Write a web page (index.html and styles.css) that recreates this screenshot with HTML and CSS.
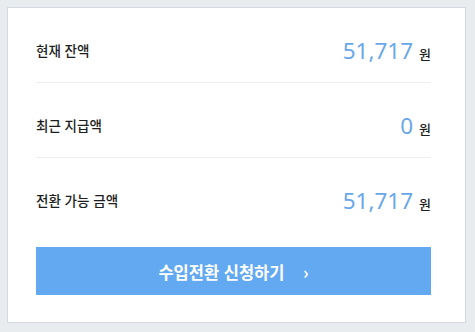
FILE: index.html
```html
<!DOCTYPE html>
<html lang="ko">
<head>
    <meta charset="UTF-8">
    <meta name="viewport" content="width=device-width, initial-scale=1.0">
    <title>수입전환</title>
    <link rel="stylesheet" href="styles.css">
</head>
<body>
    <div class="balance-card">
        <div class="row">
            <span class="label">현재 잔액</span>
            <span class="amount"><b>51,717</b><em>원</em></span>
        </div>
        <div class="row">
            <span class="label">최근 지급액</span>
            <span class="amount"><b>0</b><em>원</em></span>
        </div>
        <div class="row last">
            <span class="label">전환 가능 금액</span>
            <span class="amount"><b>51,717</b><em>원</em></span>
        </div>
        <button class="apply-btn">수입전환 신청하기 <span class="arrow">›</span></button>
    </div>
</body>
</html>
```

FILE: styles.css
```css
body {
    margin: 0;
    padding: 7px 9px 9px 7px;
    background: #e8ecef;
    font-family: "Noto Sans", "Noto Sans CJK KR", sans-serif;
    color: #1e1e1e;
}
.balance-card {
    background: #fff;
    border: 1px solid #d4dadf;
    padding: 0 34px 27px 28px;
}
.row {
    display: flex;
    justify-content: space-between;
    align-items: center;
    padding: 30px 0 20px;
    height: 24px;
    border-bottom: 1px solid #eceef0;
}
.row.last {
    border-bottom: none;
}
.label {
    font-family: "Noto Sans CJK KR", sans-serif;
    font-size: 13.5px;
    font-weight: 500;
}
.amount {
    display: flex;
    align-items: baseline;
}
.amount b {
    font-weight: normal;
    font-size: 22.5px;
    color: #6aa7ea;
}
.amount em {
    font-style: normal;
    font-family: "Noto Sans CJK KR", sans-serif;
    font-size: 13px;
    font-weight: 500;
    margin-left: 6px;
}
.apply-btn {
    display: block;
    width: 100%;
    height: 48px;
    margin-top: 15px;
    border: none;
    background: #63a9f2;
    color: #fff;
    font-family: "Noto Sans CJK KR", sans-serif;
    font-size: 16.5px;
    font-weight: bold;
}
.arrow {
    margin-left: 14px;
    font-size: 17px;
}
```
